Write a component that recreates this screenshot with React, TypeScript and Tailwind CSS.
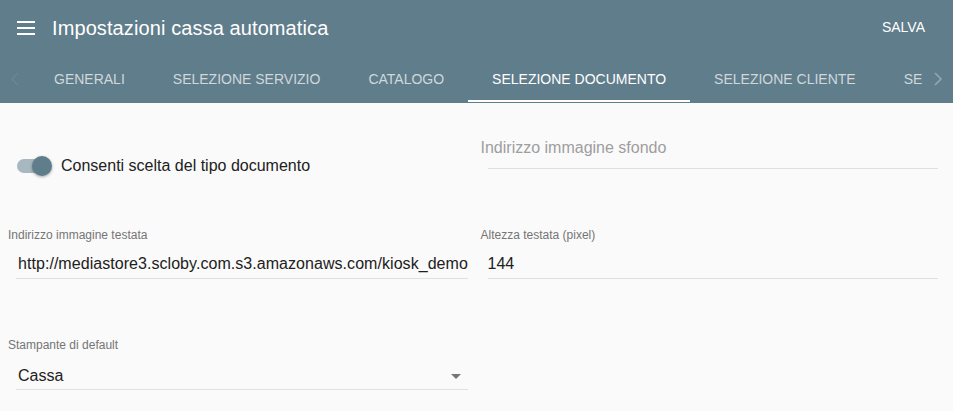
import React from "react";

const tabs = [
  "Generali",
  "Selezione servizio",
  "Catalogo",
  "Selezione documento",
  "Selezione cliente",
  "Selezione pagamento",
];

const Chevron = ({ dir, className }: { dir: "left" | "right"; className?: string }) => (
  <svg width="10" height="14" viewBox="0 0 10 14" className={className}>
    <path
      d={dir === "left" ? "M8 1 L2 7 L8 13" : "M2 1 L8 7 L2 13"}
      fill="none"
      stroke="currentColor"
      strokeWidth="1.6"
    />
  </svg>
);

const App = () => {
  const active = 3;

  return (
    <div className="min-h-screen bg-[#fafafa] font-['Liberation_Sans',Arial,sans-serif]">
      {/* Header */}
      <header className="bg-[#607d8b] text-white">
        <div className="flex h-[55px] items-center pl-[17px] pr-[28px]">
          <button className="flex h-[18px] w-[18px] flex-col justify-between py-[2px]">
            <span className="block h-[2px] w-[18px] bg-white" />
            <span className="block h-[2px] w-[18px] bg-white" />
            <span className="block h-[2px] w-[18px] bg-white" />
          </button>
          <h1 className="ml-[17px] text-[20px] leading-none tracking-[0.1px]">Impostazioni cassa automatica</h1>
          <button className="ml-auto text-[14px] font-medium">SALVA</button>
        </div>

        {/* Tabs */}
        <div className="flex h-[48px]">
          <div className="flex w-[30px] items-center justify-center text-[#6b8693]">
            <Chevron dir="left" />
          </div>
          <div className="flex w-[893px] overflow-hidden">
            {tabs.map((tab, i) => (
              <div
                key={tab}
                className={`relative flex shrink-0 items-center px-6 text-[14px] uppercase ${
                  i === active ? "text-white" : "text-[#cfd8dc]"
                }`}
              >
                {tab}
                {i === active && <span className="absolute bottom-[1px] left-0 right-0 h-[2px] bg-white" />}
              </div>
            ))}
          </div>
          <div className="flex flex-1 items-center justify-center text-[#97a6ad]">
            <Chevron dir="right" />
          </div>
        </div>
      </header>

      {/* Form */}
      <main className="px-2 pt-[35px]">
        <div className="grid grid-cols-2 gap-x-2">
          <div className="flex items-center pl-[9px] pt-[18px]">
            <div className="relative h-[20px] w-[36px]">
              <span className="absolute left-0 top-[3px] h-[14px] w-[30px] rounded-full bg-[#a8b8c0]" />
              <span className="absolute left-[15px] top-0 h-[20px] w-[20px] rounded-full bg-[#607d8b] shadow-[0_1px_3px_rgba(0,0,0,0.35)]" />
            </div>
            <span className="ml-[8px] text-[16px] leading-5 text-[#212121]">Consenti scelta del tipo documento</span>
          </div>
          <div>
            <div className="text-[16px] leading-5 text-[#9e9e9e]">Indirizzo immagine sfondo</div>
            <div className="ml-[7px] mr-[7px] mt-[10px] h-px bg-[#e0e0e0]" />
          </div>

          <div className="mt-[51px]">
            <div className="text-[12px] leading-4 text-[#757575]">Indirizzo immagine testata</div>
            <div className="ml-2 mr-[5px] mt-[11px] overflow-hidden whitespace-nowrap border-b border-[#e0e0e0] pb-1 pl-[2px] text-[16px] leading-5 tracking-[0.05px] text-[#212121]">
              http://mediastore3.scloby.com.s3.amazonaws.com/kiosk_demo
            </div>
          </div>
          <div className="mt-[51px]">
            <div className="text-[12px] leading-4 text-[#757575]">Altezza testata (pixel)</div>
            <div className="ml-[7px] mr-[7px] mt-[11px] border-b border-[#e0e0e0] pb-1 text-[16px] leading-5 text-[#212121]">
              144
            </div>
          </div>

          <div className="mt-[58px]">
            <div className="text-[12px] leading-4 text-[#757575]">Stampante di default</div>
            <div className="ml-2 mr-[5px] mt-[13px] flex items-center border-b border-[#e0e0e0] pb-[3px] pl-[2px] text-[16px] leading-5 text-[#212121]">
              <span>Cassa</span>
              <svg width="10" height="5" viewBox="0 0 10 5" className="ml-auto mr-[7px] text-[#757575]">
                <path d="M0 0 L10 0 L5 5 Z" fill="currentColor" />
              </svg>
            </div>
          </div>
          <div />
        </div>
      </main>
    </div>
  );
};

export default App;
